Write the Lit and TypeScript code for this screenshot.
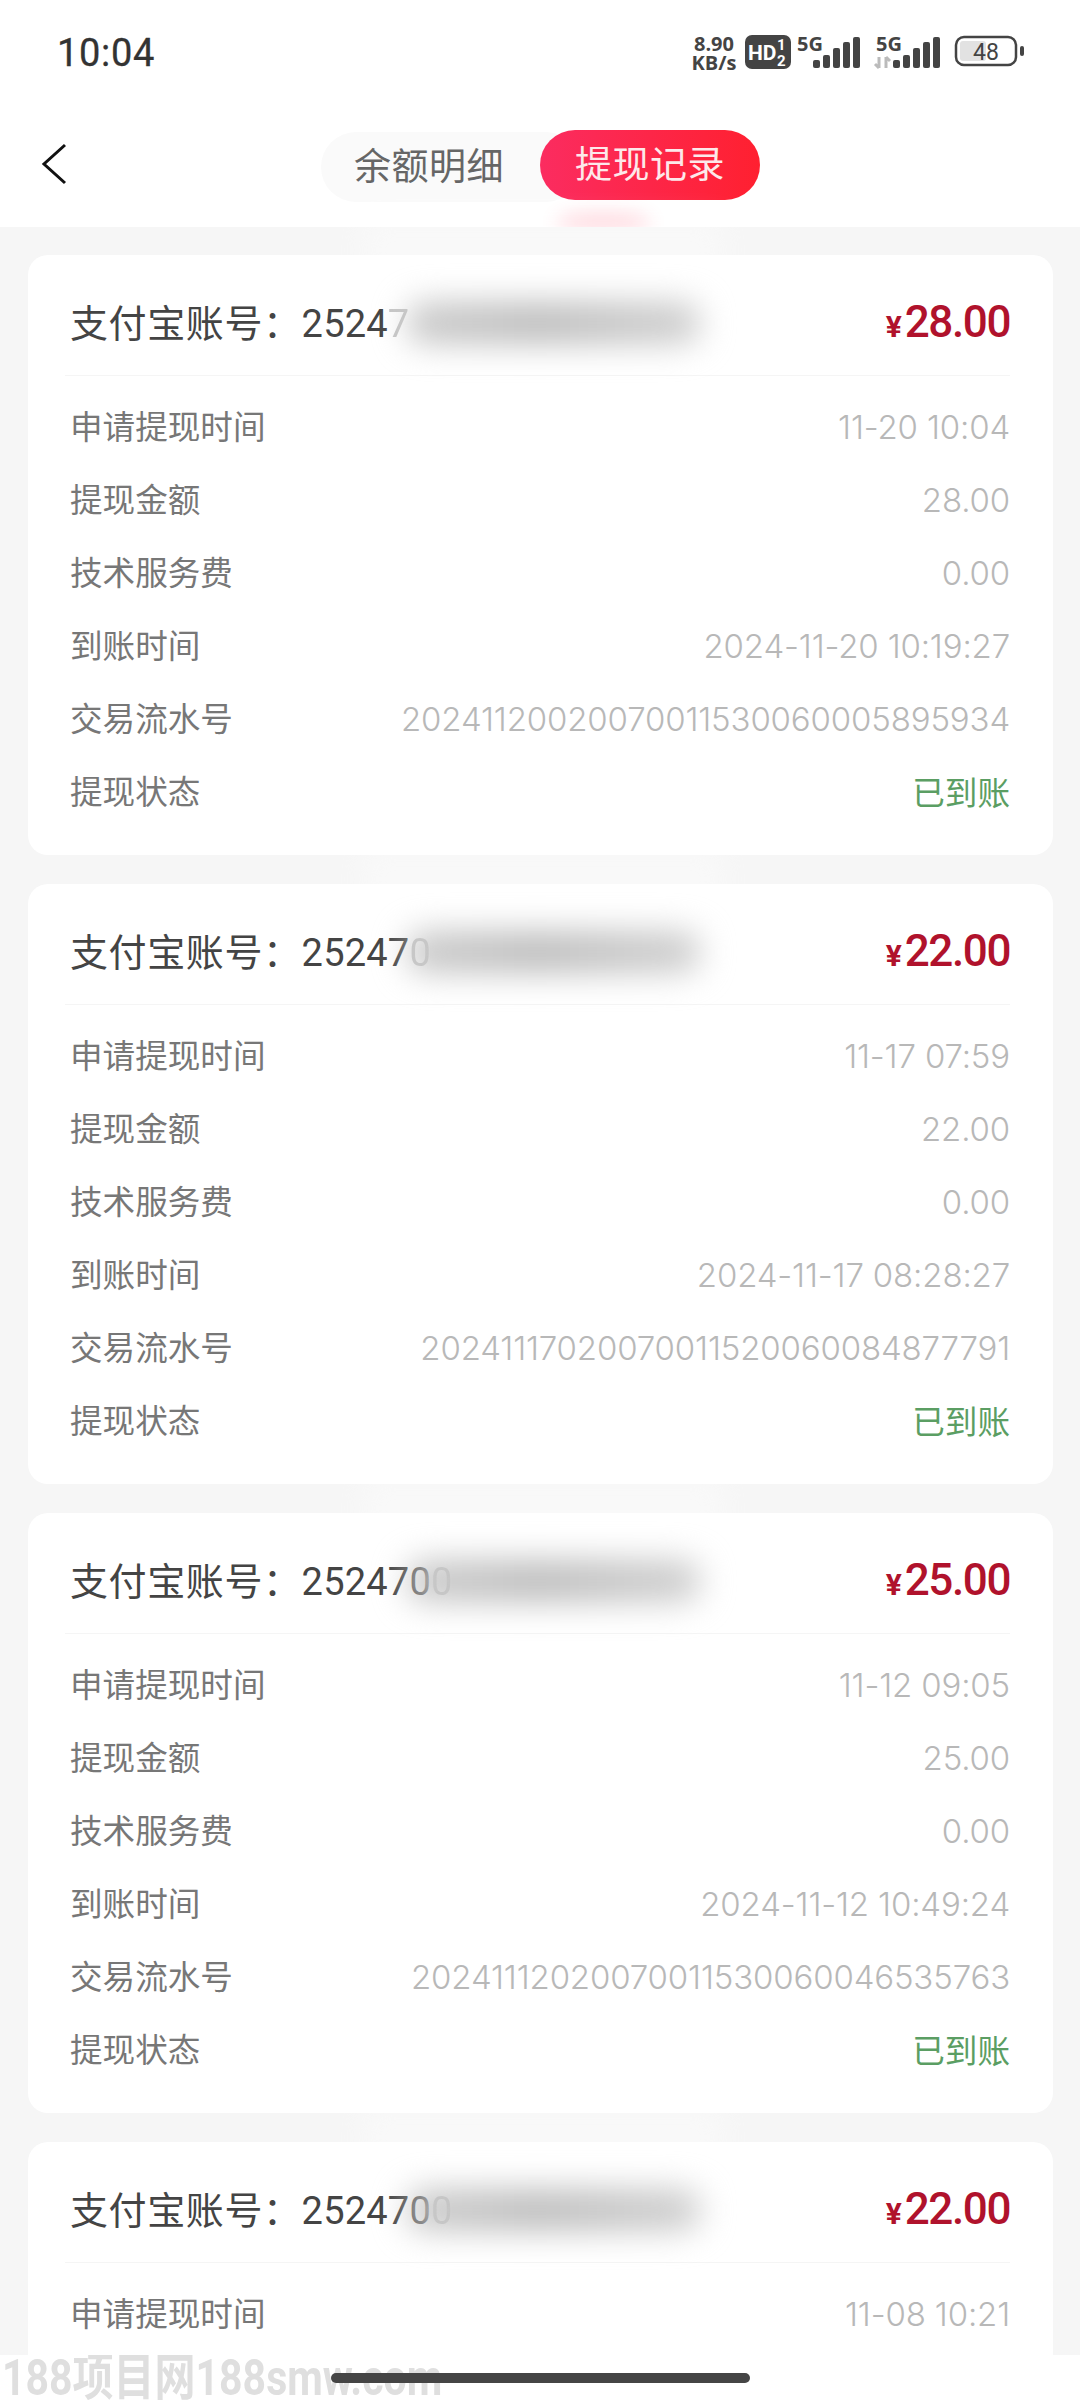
import { LitElement, html, css, svg } from "lit";
import { customElement } from "lit/decorators.js";

interface Rec { acct: string; fade: string; amount: string; apply: string; arrive: string; serial: string; }

const RECORDS: Rec[] = [
  { acct: "2524", fade: "7", amount: "28.00", apply: "11-20 10:04", arrive: "2024-11-20 10:19:27", serial: "2024112002007001153006 0005895934".replace(" ", "") },
  { acct: "25247", fade: "0", amount: "22.00", apply: "11-17 07:59", arrive: "2024-11-17 08:28:27", serial: "2024111702007001152006 0084877791".replace(" ", "") },
  { acct: "252470", fade: "0", amount: "25.00", apply: "11-12 09:05", arrive: "2024-11-12 10:49:24", serial: "2024111202007001153006 0046535763".replace(" ", "") },
  { acct: "252470", fade: "0", amount: "22.00", apply: "11-08 10:21", arrive: "", serial: "" },
];

const bars = () => svg`
  <g fill="#444">
    <rect x="0" y="23" width="7" height="8" rx="2"/>
    <rect x="10" y="18" width="7" height="13" rx="2"/>
    <rect x="20" y="11" width="7" height="20" rx="2"/>
    <rect x="30" y="5" width="7" height="26" rx="2"/>
    <rect x="40" y="0" width="7" height="31" rx="2"/>
  </g>`;

@customElement("app-root")
export class AppRoot extends LitElement {
  static styles = css`
    :host { display: block; width: 1080px; height: 2400px; overflow: hidden; position: relative; background: #f6f6f6;
      font-family: "Noto Sans CJK SC", sans-serif; }
    .head { height: 227px; background: #fff; position: relative; overflow: hidden; display: flex; flex-direction: column; }
    .status { height: 104px; padding: 0 58px 0 57px; display: flex; align-items: center; justify-content: space-between; box-sizing: border-box; }
    .time { font: 400 38px/1 Roboto, sans-serif; color: #333; letter-spacing: 0.7px; margin-top: 2px; -webkit-text-stroke: .3px #333; }
    .sys { display: flex; align-items: center; margin-right: -6px; }
    .speed { font: 700 20px/19px "Open Sans", sans-serif; color: #444; text-align: center; width: 52px; margin: 2px 5px 0 0; }
    .nav { display: flex; height: 72px; margin-top: 24px; position: relative; }
    .back { position: absolute; left: 41px; top: 15px; width: 26px; height: 42px; }
    .tabs { position: absolute; left: 321px; top: 2px; display: flex; }
    .tab0 { width: 260px; height: 70px; margin-top: 2px; border-radius: 35px; background: #fafafa; color: #666; font-size: 37px; letter-spacing: .5px; line-height: 64px; padding-left: 33px; box-sizing: border-box; }
    .tab1 { position: absolute; left: 219px; top: 0; width: 220px; height: 70px; border-radius: 35px; background: linear-gradient(90deg, #fb2c60, #ff2030); color: #fde8ea; font-size: 37px; letter-spacing: .5px; line-height: 64px; text-align: center; }
    .glow { position: absolute; left: 556px; top: 212px; width: 95px; height: 22px; border-radius: 50%; background: #ff4060; opacity: .2; filter: blur(9px); }
    .list { padding: 28px 27px 0 28px; display: flex; flex-direction: column; gap: 29px; }
    .card { background: #fff; border-radius: 20px; height: 600px; flex: none; padding: 0 43px 0 37px; box-sizing: border-box; position: relative; }
    .title { height: 121px; border-bottom: 1px solid #f5f5f5; display: flex; align-items: center; justify-content: space-between; padding: 14px 0 0 5px; box-sizing: border-box; }
    .acct { font-size: 38px; letter-spacing: .6px; color: #444; white-space: pre; line-height: 1; }
    .num { font: 400 38px/1 Roboto, sans-serif; letter-spacing: .2px; }
    .fade { opacity: .3; }
    .amount { color: #b0122c; font: 500 44px/1 Roboto, sans-serif; letter-spacing: -1.4px; display: flex; align-items: baseline; }
    .yen { font-size: 30px; font-weight: 700; margin-right: 3px; letter-spacing: 0; }
    .rows { padding-top: 14px; }
    .row { height: 73px; display: flex; align-items: center; justify-content: space-between; padding-left: 5px; }
    .label { font-size: 32.6px; color: #777; margin-bottom: 3px; line-height: 1.2; }
    .value { font: 300 33px/1 Inter, sans-serif; color: #b8b8b8; letter-spacing: -.15px; margin-top: 2px; }
    .ok { font: 400 32.6px/1.2 "Noto Sans CJK SC", sans-serif; color: #5b9e63; margin-bottom: 2px; }
    .veil { position: absolute; top: -34px; left: 335px; height: 58px; width: 360px; background: #fff; opacity: .35; filter: blur(14px); }
    .smear { position: absolute; top: 47px; left: 378px; height: 42px; width: 295px; background: linear-gradient(90deg, #cacaca, #bdbdbd 45%, #cfcfcf); border-radius: 20px; filter: blur(16px); }
    .foot { position: absolute; left: 0; right: 0; top: 2355px; bottom: 0; background: #fff; overflow: hidden; }
    .mark { position: absolute; left: 2px; top: 2px; font: 700 50px/43px Roboto, "Noto Sans CJK SC", sans-serif; color: #dfdfdf; transform: scaleX(.82); transform-origin: 0 0; white-space: nowrap; }
    .bar { position: absolute; left: 331px; top: 18px; width: 419px; height: 10px; border-radius: 5px; background: #454545; }
  `;

  private renderCard(r: Rec) {
    return html`<section class="card">
      <div class="title">
        <div class="acct">支付宝账号：<span class="num">${r.acct}<span class="fade">${r.fade}</span></span></div>
        <div class="amount"><span class="yen">¥</span>${r.amount}</div>
      </div>
      <div class="rows">
        <div class="row"><span class="label">申请提现时间</span><span class="value">${r.apply}</span></div>
        ${r.arrive ? html`
        <div class="row"><span class="label">提现金额</span><span class="value">${r.amount}</span></div>
        <div class="row"><span class="label">技术服务费</span><span class="value">0.00</span></div>
        <div class="row"><span class="label">到账时间</span><span class="value">${r.arrive}</span></div>
        <div class="row"><span class="label">交易流水号</span><span class="value">${r.serial}</span></div>
        <div class="row"><span class="label">提现状态</span><span class="ok">已到账</span></div>` : ""}
      </div>
      <div class="veil"></div>
      <div class="smear"></div>
    </section>`;
  }

  render() {
    return html`
      <header class="head">
        <div class="status">
          <span class="time">10:04</span>
          <div class="sys">
            <div class="speed">8.90<br />KB/s</div>
            <svg width="283" height="52" viewBox="0 -6 283 52">
              <rect x="0" y="3" width="46" height="34" rx="7" fill="#444"/>
              <text x="3" y="28" font-family="Roboto" font-weight="700" font-size="21" fill="#fff">HD</text>
              <text x="32" y="18" font-family="Roboto" font-weight="700" font-size="15" fill="#fff">1</text>
              <text x="32" y="34" font-family="Roboto" font-weight="700" font-size="15" fill="#fff">2</text>
              <text x="52" y="19" font-family="Open Sans" font-weight="700" font-size="20" fill="#444">5G</text>
              <g transform="translate(68,5)">${bars()}</g>
              <text x="131" y="19" font-family="Open Sans" font-weight="700" font-size="20" fill="#444">5G</text>
              <path d="M134 25v11M130 32l4 4M141 36V25M141 25l4 4" stroke="#bbb" stroke-width="3" fill="none"/>
              <g transform="translate(148,5)">${bars()}</g>
              <rect x="211" y="5" width="60" height="28" rx="8" fill="#fff" stroke="#444" stroke-width="2.5"/>
              <rect x="215" y="9" width="26" height="20" rx="3" fill="#e2e2e2"/>
              <text x="241" y="28" text-anchor="middle" font-family="Roboto" font-size="23" fill="#444">48</text>
              <rect x="275" y="14" width="4" height="10" rx="2" fill="#444"/>
            </svg>
          </div>
        </div>
        <div class="nav">
          <svg class="back" viewBox="0 0 26 42"><path d="M24 2 3 21l21 19" fill="none" stroke="#111" stroke-width="3"/></svg>
          <div class="tabs">
            <div class="tab0">余额明细</div>
            <div class="tab1">提现记录</div>
          </div>
        </div>
        <div class="glow"></div>
      </header>
      <div class="list">${RECORDS.map((r) => this.renderCard(r))}</div>
      <footer class="foot">
        <div class="mark">188项目网188smw.com</div>
        <div class="bar"></div>
      </footer>
    `;
  }
}
